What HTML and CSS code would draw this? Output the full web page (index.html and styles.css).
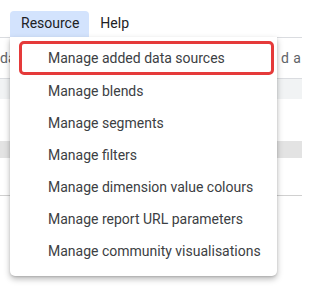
FILE: index.html
```html
<!DOCTYPE html>
<html>
<head>
<meta charset="utf-8">
<link rel="stylesheet" href="styles.css">
</head>
<body>
<div class="page">
  <div class="menubar">
    <div class="menubar-item active">Resource</div>
    <div class="menubar-item">Help</div>
  </div>
  <div class="toolbar">
    <span class="tool-left">da</span>
    <span class="tool-right">d a c</span>
  </div>
  <div class="band band-light"></div>
  <div class="spacer spacer-a"></div>
  <div class="band band-dark"></div>
  <div class="spacer spacer-b"></div>
  <div class="rule"></div>

  <ul class="menu">
    <li class="menu-item highlighted">Manage added data sources</li>
    <li class="menu-item">Manage blends</li>
    <li class="menu-item">Manage segments</li>
    <li class="menu-item">Manage filters</li>
    <li class="menu-item">Manage dimension value colours</li>
    <li class="menu-item">Manage report URL parameters</li>
    <li class="menu-item">Manage community visualisations</li>
  </ul>
</div>
</body>
</html>
```

FILE: styles.css
```css
html, body {
  margin: 0;
  padding: 0;
  background: #ffffff;
}

body {
  font-family: Roboto, "Liberation Sans", sans-serif;
  font-size: 14px;
  color: #202124;
}

.page {
  position: relative;
  width: 302px;
  height: 292px;
  overflow: hidden;
}

.menubar {
  display: flex;
  height: 37px;
  padding-left: 10px;
  align-items: flex-end;
}

.menubar-item {
  height: 26px;
  line-height: 25px;
  padding: 0 10px 0 11px;
  border-radius: 4px 4px 0 0;
  color: #202124;
}

.menubar-item.active {
  background: #d3e3fd;
}

.toolbar {
  display: flex;
  justify-content: space-between;
  height: 40px;
  line-height: 40px;
  border-top: 1px solid #dadce0;
  border-bottom: 1px solid #dadce0;
  color: #5f6368;
  white-space: nowrap;
  overflow: hidden;
}

.tool-left {
  width: 12px;
  overflow: hidden;
}

.tool-right {
  width: 21px;
  overflow: hidden;
  word-spacing: 1px;
}

.band {
  height: 20px;
}

.band-light {
  background: #f1f3f4;
}

.band-dark {
  background: #e3e3e3;
  height: 17px;
}

.spacer-a {
  height: 42px;
}

.spacer-b {
  height: 37px;
}

.rule {
  height: 1px;
  background: #d0d0d0;
}

.menu {
  position: absolute;
  left: 10px;
  top: 37px;
  width: 267px;
  margin: 0;
  padding: 4px 0 9px;
  list-style: none;
  background: #ffffff;
  border-radius: 0 0 5px 5px;
  box-shadow: 0 3px 6px rgba(0, 0, 0, 0.28), 0 1px 2px rgba(0, 0, 0, 0.12);
  box-sizing: border-box;
}

.menu-item {
  height: 32px;
  line-height: 32px;
  padding-left: 38px;
  color: #3c4043;
  white-space: nowrap;
}

.menu-item.highlighted {
  height: 28px;
  line-height: 28px;
  margin: 0 3px 0 9px;
  padding-left: 26px;
  border: 3px solid #e53a3a;
  border-radius: 5px;
}
```
